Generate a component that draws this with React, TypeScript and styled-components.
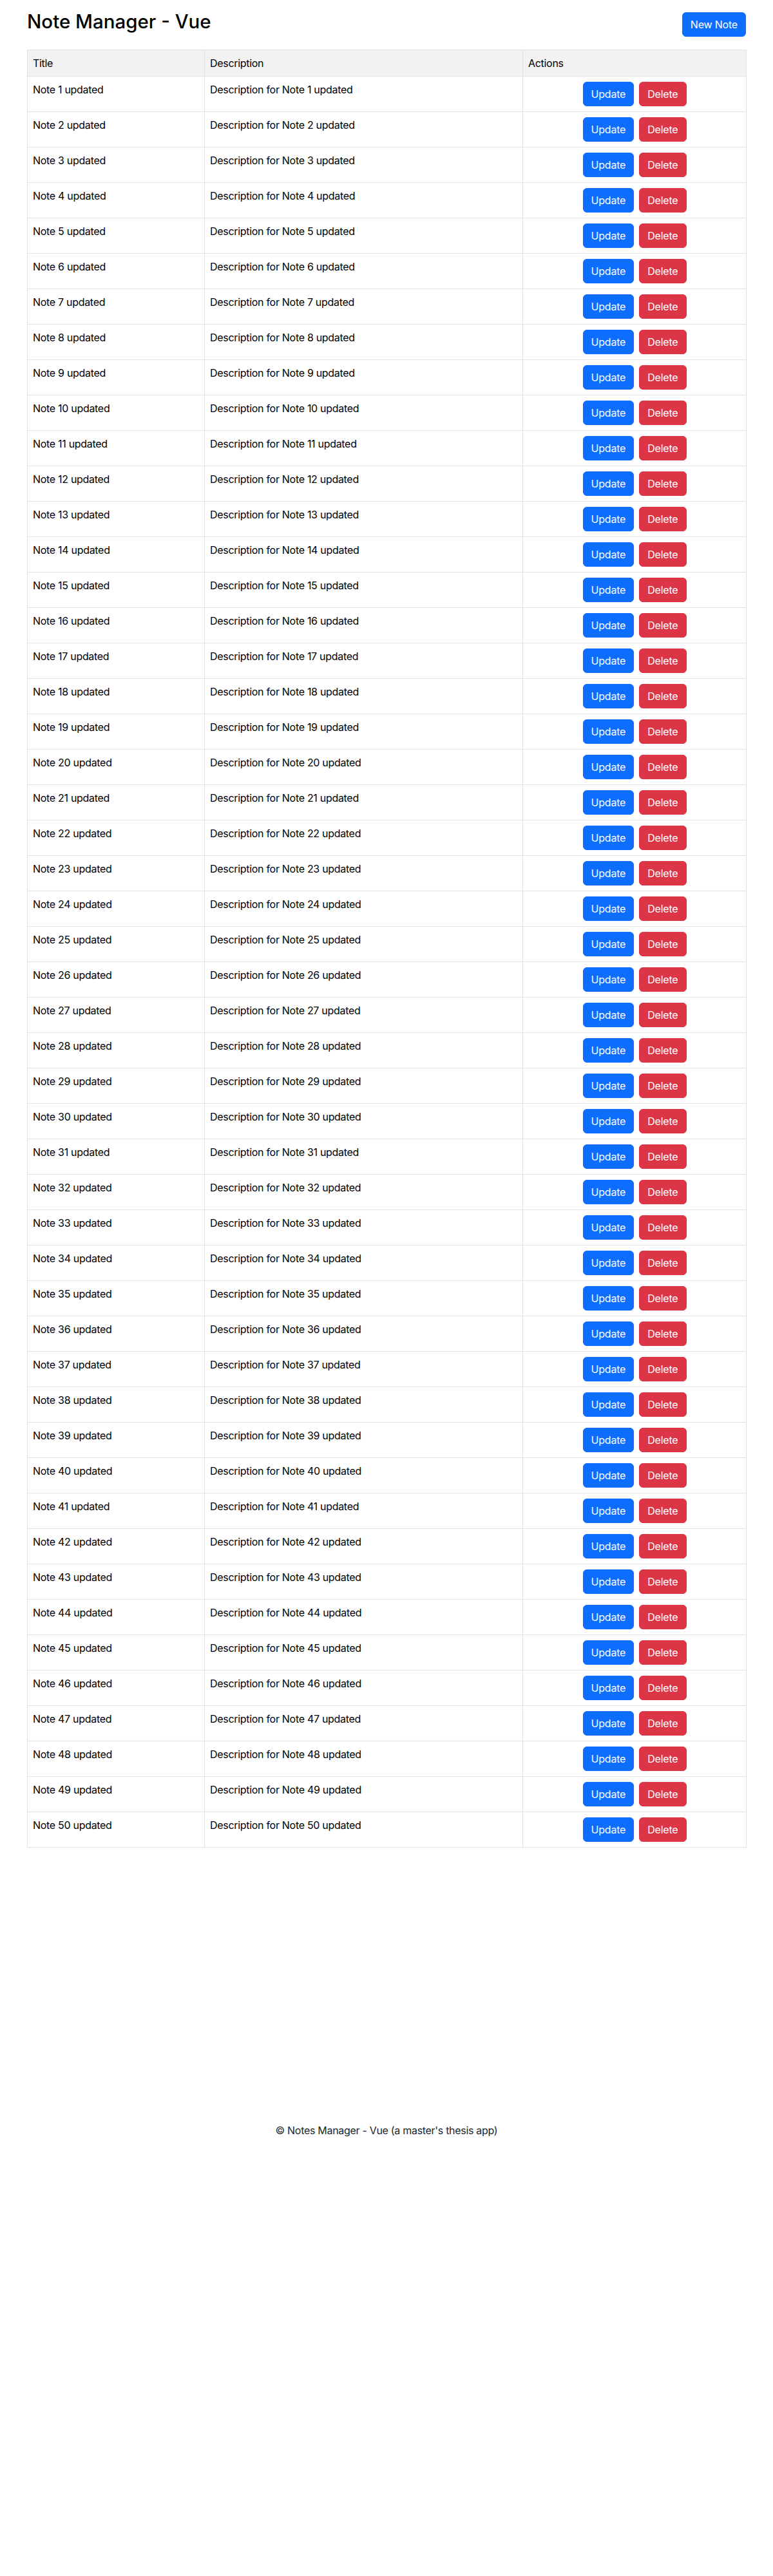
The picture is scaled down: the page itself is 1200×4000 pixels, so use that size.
import React from "react";
import styled, { createGlobalStyle } from "styled-components";

const GlobalStyle = createGlobalStyle`
  * { box-sizing: border-box; }
  body {
    margin: 0;
    font-family: Inter, "Noto Sans", "Liberation Sans", Arial, sans-serif;
    font-size: 16px;
    line-height: 1.5;
    letter-spacing: -0.3px;
    color: #212529;
    background: #fff;
  }
`;

const Page = styled.div`
  display: flex;
  flex-direction: column;
`;

const Container = styled.main`
  width: 1140px;
  margin: 0 auto;
  padding: 16px 12px 0;
`;

const Header = styled.header`
  display: flex;
  align-items: center;
  justify-content: space-between;
  margin-bottom: 18px;
`;

const Title = styled.h1`
  margin: 0 0 8px;
  font-size: 29.5px;
  font-weight: 500;
  line-height: 1.2;
  letter-spacing: 0;
  color: #000;
`;

const Button = styled.button<{ $variant: "primary" | "danger" }>`
  display: inline-block;
  font-family: inherit;
  font-size: 16px;
  font-weight: 400;
  line-height: 1.5;
  letter-spacing: -0.2px;
  padding: 6px 12px;
  border-radius: 6px;
  border: 1px solid ${(p) => (p.$variant === "primary" ? "#0d6efd" : "#dc3545")};
  background: ${(p) => (p.$variant === "primary" ? "#0d6efd" : "#dc3545")};
  color: #fff;
  cursor: pointer;
`;

const Table = styled.table`
  width: 100%;
  border-collapse: collapse;
  table-layout: fixed;
  border: 1px solid #dee2e6;
`;

const Th = styled.th`
  text-align: left;
  font-weight: 400;
  padding: 8px;
  background: #f2f2f2;
  border: 1px solid #dee2e6;
  color: #000;
`;

const Td = styled.td`
  padding: 8px;
  vertical-align: top;
  border: 1px solid #dee2e6;
  color: #000;
`;

const ActionCell = styled.td`
  padding: 8px;
  border: 1px solid #dee2e6;
`;

const Actions = styled.div`
  display: flex;
  justify-content: center;
  gap: 8px;
`;

const Footer = styled.footer`
  margin-top: 427px;
  text-align: center;
  padding-bottom: 16px;
  color: #212529;
`;

const notes = Array.from({ length: 50 }, (_, i) => ({
  id: i + 1,
  title: `Note ${i + 1} updated`,
  description: `Description for Note ${i + 1} updated`,
}));

export default function App() {
  return (
    <Page>
      <GlobalStyle />
      <Container>
        <Header>
          <Title>Note Manager - Vue</Title>
          <Button $variant="primary">New Note</Button>
        </Header>
        <Table>
          <colgroup>
            <col style={{ width: 275 }} />
            <col style={{ width: 494 }} />
            <col style={{ width: 347 }} />
          </colgroup>
          <thead>
            <tr>
              <Th>Title</Th>
              <Th>Description</Th>
              <Th>Actions</Th>
            </tr>
          </thead>
          <tbody>
            {notes.map((n) => (
              <tr key={n.id}>
                <Td>{n.title}</Td>
                <Td>{n.description}</Td>
                <ActionCell>
                  <Actions>
                    <Button $variant="primary">Update</Button>
                    <Button $variant="danger">Delete</Button>
                  </Actions>
                </ActionCell>
              </tr>
            ))}
          </tbody>
        </Table>
      </Container>
      <Footer>© Notes Manager - Vue (a master's thesis app)</Footer>
    </Page>
  );
}
